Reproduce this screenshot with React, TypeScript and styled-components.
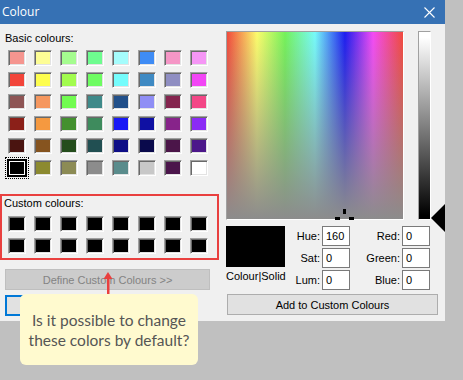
import { Fragment } from "react";
import styled, { createGlobalStyle, css } from "styled-components";

const GlobalStyle = createGlobalStyle`
  html, body {
    margin: 0;
    padding: 0;
    background: #c0c0c0;
  }
  body {
    width: 463px;
    height: 380px;
    overflow: hidden;
    font-family: "Liberation Sans", Arial, sans-serif;
  }
`;

const basicColours = [
  ["#f5958f", "#fdfd95", "#a5fc8f", "#6efc8f", "#a5fcfc", "#3f8cf5", "#f596c6", "#f596f5"],
  ["#f2453a", "#fdfd4e", "#a2fc4e", "#6efc62", "#75fcfc", "#3f8ac3", "#8f8ec2", "#f246f5"],
  ["#8e5555", "#f5975f", "#72fc51", "#3f8a8a", "#22508a", "#8f8ef5", "#85254f", "#f34787"],
  ["#8b2019", "#f59940", "#43902f", "#3e8b5d", "#1919f5", "#0f10a3", "#87238a", "#8b2bf5"],
  ["#4a1410", "#86541f", "#244d1c", "#214f52", "#0f0f87", "#0a0a4c", "#4b1549", "#4c178a"],
  ["#000000", "#8c8a30", "#8c8b55", "#8c8c8c", "#5a8c8c", "#c8c8c8", "#4b154b", "#ffffff"],
];

const Page = styled.div`
  position: relative;
  width: 463px;
  height: 380px;
`;

const Dialog = styled.div`
  width: 445px;
  background: #f0f0f0;
  display: flex;
  flex-direction: column;
`;

const TitleBar = styled.div`
  height: 24px;
  background: #3671b4;
  display: flex;
  align-items: center;
  justify-content: space-between;
  padding: 0 10px 0 2px;
  color: #fff;
`;

const Title = styled.span`
  font-family: "Open Sans", "Noto Sans", sans-serif;
  font-size: 12px;
  line-height: 24px;
`;

const CloseIcon = styled.svg`
  display: block;
`;

const Body = styled.div`
  display: flex;
  height: 297px;
`;

const LeftPane = styled.div`
  width: 219px;
  display: flex;
  flex-direction: column;
  padding-top: 8px;
`;

const RightPane = styled.div`
  margin-left: 7px;
  display: flex;
  flex-direction: column;
  padding-top: 7px;
`;

const Label = styled.div<{ $indent?: number }>`
  font-size: 11px;
  line-height: 13px;
  color: #000;
  padding-left: ${(p) => p.$indent ?? 5}px;
  white-space: nowrap;
`;

const SwatchGrid = styled.div<{ $top: number }>`
  display: grid;
  grid-template-columns: repeat(8, 18px);
  grid-auto-rows: 16px;
  column-gap: 8px;
  row-gap: 6px;
  margin: ${(p) => p.$top}px 0 0 8px;
`;

const Swatch = styled.div<{ $color: string; $selected?: boolean }>`
  box-sizing: border-box;
  background: ${(p) => p.$color};
  border: 1px solid;
  border-color: #a0a0a0 #ffffff #ffffff #a0a0a0;
  box-shadow: inset 1px 1px 0 #696969, inset -1px -1px 0 #e3e3e3;
  ${(p) =>
    p.$selected &&
    css`
      border-color: #000;
      box-shadow: 0 0 0 1px #000, inset 0 0 0 1px #fff;
      outline: 1px dotted #000;
      outline-offset: 2px;
    `}
`;

const CustomBox = styled.div`
  margin-top: 18px;
  border: 2px solid #e9403f;
  padding: 1px 0 4px 0;
  display: flex;
  flex-direction: column;
`;

const CustomGrid = styled(SwatchGrid)`
  margin-left: 6px;
`;

const PushButton = styled.button<{ $focused?: boolean }>`
  box-sizing: border-box;
  height: 21px;
  padding: 0;
  font-family: "Liberation Sans", Arial, sans-serif;
  font-size: 11px;
  color: #000;
  background: #e1e1e1;
  border: 1px solid #adadad;
  ${(p) =>
    p.$focused &&
    css`
      border: 2px solid #0078d7;
    `}
  &:disabled {
    background: #cccccc;
    border-color: #bfbfbf;
    color: #838383;
  }
`;

const DefineButton = styled(PushButton)`
  margin: 9px 0 0 5px;
  width: 205px;
`;

const ButtonRow = styled.div`
  display: flex;
  gap: 6px;
  margin: 5px 0 0 5px;
`;

const SmallButton = styled(PushButton)`
  width: 68px;
`;

const PickerRow = styled.div`
  display: flex;
  align-items: flex-start;
`;

const Sunken = css`
  box-sizing: border-box;
  border: 1px solid;
  border-color: #a0a0a0 #ffffff #ffffff #a0a0a0;
`;

const Spectrum = styled.div`
  ${Sunken};
  position: relative;
  width: 178px;
  height: 189px;
  background: linear-gradient(to bottom, rgba(140, 140, 140, 0), #8c8c8c),
    linear-gradient(
      to right,
      #f24a3c 0%,
      #fcfc6c 17%,
      #74f25a 33%,
      #76fafa 50%,
      #1d1df0 67%,
      #f44bf5 83%,
      #f24a3c 100%
    );
`;

const Crosshair = styled.svg`
  position: absolute;
  left: 108px;
  top: 177px;
`;

const LumBar = styled.div`
  ${Sunken};
  position: relative;
  margin-left: 14px;
  width: 13px;
  height: 189px;
  background: linear-gradient(to bottom, #ffffff 3%, #000000 98%);
`;

const LumArrow = styled.svg`
  position: absolute;
  left: 12px;
  top: 172px;
`;

const ValuesRow = styled.div`
  display: flex;
  margin-top: 6px;
`;

const SampleColumn = styled.div`
  display: flex;
  flex-direction: column;
  width: 59px;
`;

const Sample = styled.div`
  height: 41px;
  background: #000;
`;

const SampleLabel = styled.div`
  font-size: 11px;
  line-height: 13px;
  margin-top: 3px;
  white-space: nowrap;
`;

const FieldGrid = styled.div<{ $labelWidth: number }>`
  display: grid;
  grid-template-columns: ${(p) => p.$labelWidth}px 28px;
  grid-auto-rows: 20px;
  column-gap: 2px;
  row-gap: 2px;
`;

const FieldLabel = styled.label`
  font-size: 11px;
  text-align: right;
  align-self: center;
  white-space: nowrap;
`;

const Field = styled.div`
  box-sizing: border-box;
  border: 1px solid #7a7a7a;
  background: #fff;
  font-size: 11px;
  line-height: 18px;
  padding-left: 3px;
`;

const AddButton = styled(PushButton)`
  margin: 4px 0 0 1px;
  width: 211px;
`;

const Callout = styled.div`
  position: absolute;
  left: 20px;
  top: 294px;
  width: 178px;
  height: 71px;
  box-sizing: border-box;
  background: #fffacf;
  border-radius: 6px;
  display: flex;
  align-items: center;
  justify-content: center;
  text-align: center;
  font-family: Lato, "Open Sans", sans-serif;
  font-size: 15.5px;
  line-height: 20px;
  color: #555555;
`;

const Pointer = styled.svg`
  position: absolute;
  left: 103px;
  top: 272px;
`;

export default function App() {
  const fieldsA = [
    ["Hue:", "160"],
    ["Sat:", "0"],
    ["Lum:", "0"],
  ];
  const fieldsB = [
    ["Red:", "0"],
    ["Green:", "0"],
    ["Blue:", "0"],
  ];

  return (
    <>
      <GlobalStyle />
      <Page>
        <Dialog>
          <TitleBar>
            <Title>Colour</Title>
            <CloseIcon width="11" height="11" viewBox="0 0 11 11">
              <path d="M0.5 0.5 L10.5 10.5 M10.5 0.5 L0.5 10.5" stroke="#fff" strokeWidth="1.1" />
            </CloseIcon>
          </TitleBar>
          <Body>
            <LeftPane>
              <Label>Basic colours:</Label>
              <SwatchGrid $top={5}>
                {basicColours.flat().map((c, i) => (
                  <Swatch key={i} $color={c} $selected={i === 40} />
                ))}
              </SwatchGrid>
              <CustomBox>
                <Label $indent={2}>Custom colours:</Label>
                <CustomGrid $top={6}>
                  {Array.from({ length: 16 }).map((_, i) => (
                    <Swatch key={i} $color="#000" />
                  ))}
                </CustomGrid>
              </CustomBox>
              <DefineButton disabled>Define Custom Colours &gt;&gt;</DefineButton>
              <ButtonRow>
                <SmallButton $focused>OK</SmallButton>
                <SmallButton>Cancel</SmallButton>
              </ButtonRow>
            </LeftPane>
            <RightPane>
              <PickerRow>
                <Spectrum>
                  <Crosshair width="20" height="11" viewBox="0 0 20 11">
                    <rect x="8" y="0" width="3" height="5" fill="#000" />
                    <rect x="0" y="8" width="5" height="3" fill="#000" />
                    <rect x="14" y="8" width="5" height="3" fill="#000" />
                  </Crosshair>
                </Spectrum>
                <LumBar>
                  <LumArrow width="14" height="28" viewBox="0 0 14 28">
                    <polygon points="0,14 14,0 14,28" fill="#000" />
                  </LumArrow>
                </LumBar>
              </PickerRow>
              <ValuesRow>
                <SampleColumn>
                  <Sample />
                  <SampleLabel>Colour|Solid</SampleLabel>
                </SampleColumn>
                <FieldGrid $labelWidth={35}>
                  {fieldsA.map(([l, v]) => (
                    <Fragment key={l}>
                      <FieldLabel>{l}</FieldLabel>
                      <Field>{v}</Field>
                    </Fragment>
                  ))}
                </FieldGrid>
                <FieldGrid $labelWidth={50}>
                  {fieldsB.map(([l, v]) => (
                    <Fragment key={l}>
                      <FieldLabel>{l}</FieldLabel>
                      <Field>{v}</Field>
                    </Fragment>
                  ))}
                </FieldGrid>
              </ValuesRow>
              <AddButton>Add to Custom Colours</AddButton>
            </RightPane>
          </Body>
        </Dialog>
        <Pointer width="10" height="22" viewBox="0 0 10 22">
          <polygon points="5,0 9.5,7 0.5,7" fill="#e9403f" />
          <rect x="4" y="6" width="2.5" height="16" fill="#e9403f" />
        </Pointer>
        <Callout>
          Is it possible to change
          <br />
          these colors by default?
        </Callout>
      </Page>
    </>
  );
}
